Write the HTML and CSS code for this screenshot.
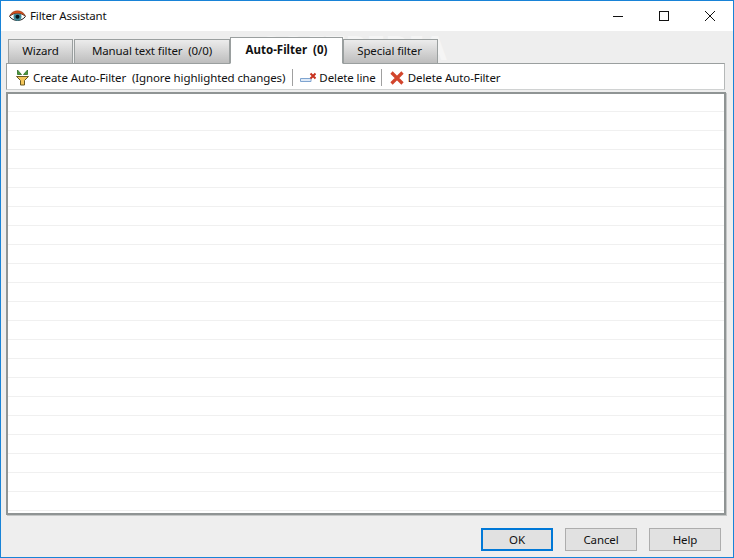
FILE: index.html
```html
<!DOCTYPE html>
<html lang="en">
<head>
<meta charset="utf-8">
<title>Filter Assistant</title>
<link rel="stylesheet" href="styles.css">
</head>
<body>
<div class="window">
  <header class="titlebar">
    <svg class="app-icon" width="17" height="14" viewBox="0 0 17 14">
      <path d="M0.7 7.5C4 3 13 3 16.3 7.5C13 12.8 4 12.8 0.7 7.5Z" fill="#fff" stroke="#1a1a1a" stroke-width="1"/>
      <circle cx="8.5" cy="7.7" r="4" fill="#3c8a9a"/>
      <circle cx="8.5" cy="7.7" r="2" fill="#06141a"/>
      <path d="M0.5 7C3.5 0 13.5 0 16.5 7C13 3.4 4 3.4 0.5 7Z" fill="#d9501c" stroke="#7a2c10" stroke-width="0.5"/>
    </svg>
    <span class="title">Filter Assistant</span>
    <div class="controls">
      <span class="ctl"><svg width="12" height="12" viewBox="0 0 12 12"><path d="M1 6.5H11" stroke="#111" stroke-width="1"/></svg></span>
      <span class="ctl"><svg width="12" height="12" viewBox="0 0 12 12"><rect x="1.5" y="1.5" width="9" height="9" fill="none" stroke="#111"/></svg></span>
      <span class="ctl"><svg width="12" height="12" viewBox="0 0 12 12"><path d="M1 1L11 11M11 1L1 11" stroke="#111" stroke-width="1"/></svg></span>
    </div>
  </header>
  <main class="body">
    <span class="watermark">SOFTPEDIA</span>
    <nav class="tabs">
      <div class="tab tab-wizard">Wizard</div>
      <div class="tab tab-manual">Manual text filter&nbsp; (0/0)</div>
      <div class="tab tab-auto">Auto-Filter&nbsp; (0)</div>
      <div class="tab tab-special">Special filter</div>
    </nav>
    <div class="toolbar">
      <span class="tool tool-create">
        <svg width="15" height="17" viewBox="0 0 15 17">
          <path d="M1.5 7.5H13.5L9.5 11.5V16H5.5V11.5Z" fill="#f4c65a" stroke="#6a5a24" stroke-width="1"/>
          <path d="M2.5 5.5V1L6.5 5.5Z" fill="#4c9a3e" stroke="#2f6e28" stroke-width="0.8"/>
          <path d="M12.5 5.5V1L8.5 5.5Z" fill="#4c9a3e" stroke="#2f6e28" stroke-width="0.8"/>
        </svg>
        Create Auto-Filter&nbsp; (Ignore highlighted changes)
      </span>
      <span class="sep sep-first"></span>
      <span class="tool tool-line">
        <svg width="16" height="12" viewBox="0 0 16 12">
          <path d="M0.5 6.5H11V9.5H0.5Z" fill="#dfeaf7" stroke="#7fa4d0"/>
          <path d="M10.5 1.5L15.5 6.5M15.5 1.5L10.5 6.5" stroke="#c8321f" stroke-width="2"/>
        </svg>
        Delete line
      </span>
      <span class="sep sep-second"></span>
      <span class="tool tool-delete">
        <svg width="14" height="14" viewBox="0 0 14 14">
          <path d="M1.5 1.5L12.5 12.5M12.5 1.5L1.5 12.5" stroke="#d2452c" stroke-width="3.2"/>
        </svg>
        Delete Auto-Filter
      </span>
    </div>
    <section class="list">
      <div class="row"></div><div class="row"></div><div class="row"></div><div class="row"></div>
      <div class="row"></div><div class="row"></div><div class="row"></div><div class="row"></div>
      <div class="row"></div><div class="row"></div><div class="row"></div><div class="row"></div>
      <div class="row"></div><div class="row"></div><div class="row"></div><div class="row"></div>
      <div class="row"></div><div class="row"></div><div class="row"></div><div class="row"></div>
      <div class="row"></div><div class="row"></div>
    </section>
    <footer class="buttons">
      <button class="btn btn-default">OK</button>
      <button class="btn">Cancel</button>
      <button class="btn">Help</button>
    </footer>
  </main>
</div>
</body>
</html>
```
FILE: styles.css
```css
* { box-sizing: border-box; }
html, body { margin: 0; padding: 0; }
body {
  width: 734px;
  height: 558px;
  overflow: hidden;
  font-family: "Noto Sans", "Open Sans", sans-serif;
  font-size: 11.5px;
  letter-spacing: -0.1px;
  color: #111;
}
.window {
  width: 734px;
  height: 558px;
  border: 1px solid #1883d7;
  display: flex;
  flex-direction: column;
  background: #eeeeee;
}
.titlebar {
  height: 30px;
  background: #fff;
  display: flex;
  align-items: center;
  padding-left: 8px;
  flex: none;
}
.app-icon { margin-right: 4px; }
.title { font-size: 11.5px; letter-spacing: -0.15px; padding-bottom: 1px; }
.controls { margin-left: auto; display: flex; }
.ctl {
  width: 46px;
  height: 30px;
  display: flex;
  align-items: center;
  justify-content: center;
}
.body {
  position: relative;
  flex: 1;
  display: flex;
  flex-direction: column;
  padding: 6px 7px 0 5px;
  min-height: 0;
}
.watermark {
  position: absolute;
  left: 260px;
  top: -1px;
  font-size: 34px;
  font-weight: 700;
  line-height: 34px;
  white-space: nowrap;
  letter-spacing: 0;
  color: rgba(255, 255, 255, 0.45);
}
.tabs {
  position: relative;
  display: flex;
  align-items: flex-end;
  height: 26px;
  padding-left: 2px;
  flex: none;
}
.tab {
  height: 24px;
  border: 1px solid #9a9f9f;
  border-bottom: 0;
  background: linear-gradient(#ececec, #bdbdbd);
  display: flex;
  align-items: center;
  justify-content: center;
  padding-bottom: 2px;
}
.tab-wizard { width: 65px; margin-right: 1px; }
.tab-manual { width: 156px; }
.tab-auto {
  width: 113px;
  height: 27px;
  background: #fff;
  font-weight: 700;
  letter-spacing: 0;
  border-bottom: 1px solid #fff;
  margin-bottom: -1px;
  z-index: 1;
}
.tab-special { width: 95px; padding-right: 2px; }
.toolbar {
  position: relative;
  height: 27px;
  flex: none;
  background: #fff;
  border: 1px solid #d0d2d2;
  border-top: 1px solid #9a9f9f;
  border-left: 1px solid #9a9f9f;
  border-right: 1px solid #b5b8b8;
  display: flex;
  align-items: center;
  padding: 2px 0 0 8px;
  margin: 0 1px 2px 0;
}
.tool { display: flex; align-items: center; white-space: nowrap; }
.tool-create svg { margin-right: 3px; margin-bottom: 1px; }
.tool-line svg { margin-right: 3px; }
.tool-delete svg { margin-right: 4px; }
.sep { width: 1px; height: 17px; background: #a0a0a0; }
.sep-first { margin: 0 7px 0 7px; }
.sep-second { margin: 0 8px 0 5px; }
.list {
  height: 423px;
  flex: none;
  background: #fff;
  border: 2px solid #8f9494;
  box-shadow: 1px 1px 0 #c4c6c6;
  overflow: hidden;
}
.row { height: 19px; border-bottom: 1px solid #f0f0f0; }
.row:first-child { height: 18px; }
.buttons {
  display: flex;
  justify-content: flex-end;
  gap: 12px;
  padding: 13px 5px 0 0;
}
.btn {
  width: 72px;
  height: 23px;
  font-family: inherit;
  font-size: 11.5px;
  letter-spacing: -0.1px;
  color: #111;
  background: #e1e1e1;
  border: 1px solid #adadad;
  padding: 0;
}
.btn-default { border: 2px solid #0078d7; }
```
